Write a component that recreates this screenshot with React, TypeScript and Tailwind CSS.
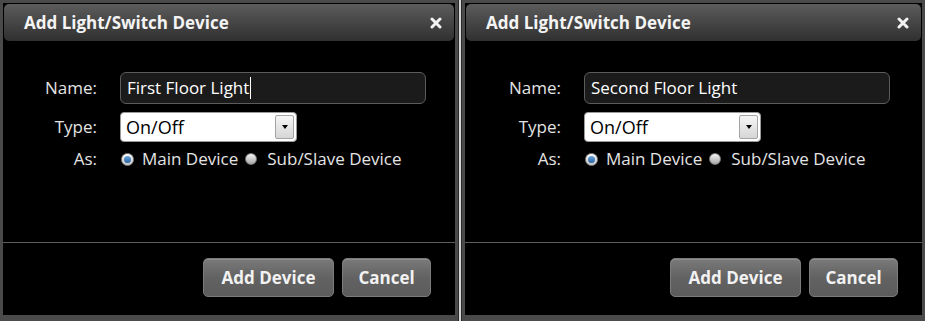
import React from "react"

const font = { fontFamily: '"Open Sans", "Noto Sans", Arial, sans-serif' }

function CloseIcon() {
  return (
    <svg width="12" height="12" viewBox="0 0 12 12" className="block">
      <path d="M2 2 L10 10 M10 2 L2 10" stroke="#f2f2f2" strokeWidth="3" strokeLinecap="round" />
    </svg>
  )
}

function Radio({ checked }: { checked?: boolean }) {
  if (checked) {
    return (
      <span className="flex h-[13px] w-[13px] shrink-0 items-center justify-center rounded-full border border-[#8a8a8a] bg-gradient-to-b from-[#ffffff] to-[#c4c4c4]">
        <span className="block h-[7px] w-[7px] rounded-full bg-gradient-to-b from-[#6aa6dc] to-[#2a63a3]" />
      </span>
    )
  }
  return <span className="block h-[12px] w-[12px] shrink-0 rounded-full border border-[#777] bg-gradient-to-b from-[#f4f4f4] to-[#a8a8a8]" />
}

function DialogButton({ children, w }: { children: React.ReactNode; w: string }) {
  return (
    <button
      className={`${w} h-[39px] rounded-[5px] border border-[#7c7c7c] bg-gradient-to-b from-[#7a7a7a] via-[#626262] to-[#5c5c5c] text-[17px] font-bold text-[#f2f2f2] shadow-[inset_0_1px_0_rgba(255,255,255,0.15)]`}
    >
      {children}
    </button>
  )
}

function DeviceDialog({ name, cursor, width, labelCol }: { name: string; cursor?: boolean; width: string; labelCol: string }) {
  return (
    <div className={`${width} flex h-full flex-col border-x-[3px] border-t-[3px] border-b-[6px] border-[#4a4a4a] bg-black`}>
      {/* title bar */}
      <div className="mx-[1px] mt-[1px] flex h-[37px] items-center justify-between rounded-[5px] bg-gradient-to-b from-[#5c5c5c] to-[#303030] pl-[20px] pr-[12px]">
        <span className="text-[17px] font-bold text-[#f4f4f4]">Add Light/Switch Device</span>
        <CloseIcon />
      </div>

      {/* form */}
      <div className={`grid ${labelCol} items-center gap-x-[23px] gap-y-[8px] pt-[31px] text-[17px] text-[#e4e4e4]`}>
        <span className="text-right">Name:</span>
        <div className="flex h-[32px] w-[306px] items-center rounded-[6px] border border-[#5c5c5c] bg-[#1b1b1b] px-[6px] text-white">
          <span>{name}</span>
          {cursor && <span className="ml-[1px] h-[22px] w-[1px] bg-white" />}
        </div>

        <span className="text-right">Type:</span>
        <div className="flex h-[30px] w-[177px] items-center justify-between rounded-[4px] border border-[#9a9a9a] bg-white pl-[5px] pr-[2px] text-[18px] text-black">
          <span>On/Off</span>
          <span className="flex h-[24px] w-[19px] items-center justify-center rounded-[2px] border border-[#a4a4a4] bg-gradient-to-b from-[#f6f6f6] to-[#d6d6d6]">
            <span className="h-0 w-0 border-x-[3px] border-t-[4px] border-x-transparent border-t-black" />
          </span>
        </div>

        <span className="h-[18px] text-right leading-[18px]">As:</span>
        <div className="flex h-[18px] items-center pl-[1px] leading-[18px]">
          <Radio checked />
          <span className="ml-[8px]">Main Device</span>
          <span className="ml-[7px]">
            <Radio />
          </span>
          <span className="ml-[10px]">Sub/Slave Device</span>
        </div>
      </div>

      <div className="flex-1" />

      {/* footer */}
      <div className="h-[1px] bg-[#5e5e5e]" />
      <div className="flex justify-end gap-[8px] pb-[18px] pr-[24px] pt-[15px]">
        <DialogButton w="w-[131px]">Add Device</DialogButton>
        <DialogButton w="w-[89px]">Cancel</DialogButton>
      </div>
    </div>
  )
}

export default function App() {
  return (
    <div className="flex h-[321px] w-[925px] bg-[#262626]" style={font}>
      <DeviceDialog name="First Floor Light" cursor width="w-[458px]" labelCol="grid-cols-[94px_auto]" />
      <div className="w-[1px] bg-[#2a2a2a]" />
      <div className="w-[2px] bg-[#d6d6d6]" />
      <div className="w-[1px] bg-[#2a2a2a]" />
      <DeviceDialog name="Second Floor Light" width="flex-1" labelCol="grid-cols-[96px_auto]" />
    </div>
  )
}
